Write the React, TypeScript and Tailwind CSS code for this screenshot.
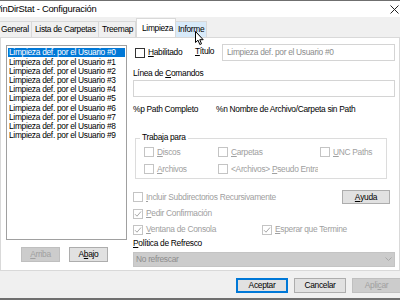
import type { ReactNode } from "react";

const users = Array.from({ length: 10 }, (_, i) => `Limpieza def. por el Usuario #${i}`);

function Box({ checked = false, disabled = true }: { checked?: boolean; disabled?: boolean }) {
  return (
    <span
      className={`inline-flex items-center justify-center w-[10px] h-[10px] border bg-white shrink-0 ${
        disabled ? "border-[#c4c4c4]" : "border-[#333333]"
      }`}
    >
      {checked && (
        <svg width="8" height="8" viewBox="0 0 8 8">
          <path d="M1 4.2 L3 6.2 L7 1.5" fill="none" stroke="#a8a8a8" strokeWidth="1" />
        </svg>
      )}
    </span>
  );
}

function Check({
  children,
  checked,
  disabled = true,
  className = "",
}: {
  children: ReactNode;
  checked?: boolean;
  disabled?: boolean;
  className?: string;
}) {
  return (
    <div className={`flex items-center gap-[3px] whitespace-nowrap ${disabled ? "text-[#a0a0a0]" : "text-black"} ${className}`}>
      <Box checked={checked} disabled={disabled} />
      <span>{children}</span>
    </div>
  );
}

function Btn({
  children,
  className = "",
  variant = "normal",
}: {
  children: ReactNode;
  className?: string;
  variant?: "normal" | "default" | "disabled";
}) {
  const look =
    variant === "default"
      ? "bg-[#e1e1e1] border-[#0078d7] border-2 text-black"
      : variant === "disabled"
      ? "bg-[#cccccc] border-[#bfbfbf] border text-[#a0a0a0]"
      : "bg-[#e1e1e1] border-[#adadad] border text-black";
  return <div className={`flex items-center justify-center ${look} ${className}`}>{children}</div>;
}

export default function App() {
  return (
    <div className="relative w-[400px] h-[300px] overflow-hidden bg-[#f0f0f0] text-[8.4px] tracking-[-0.3px] leading-none text-black font-['Liberation_Sans',Arial,sans-serif]">
      {/* TITLE BAR */}
      <div className="h-[17px] bg-white border-t border-[#6f6f6f] flex items-center justify-between">
        <span className="-ml-[8px] text-[9.4px] tracking-[-0.25px] whitespace-nowrap">WinDirStat - Configuración</span>
        <svg width="9" height="9" viewBox="0 0 9 9" className="mr-[1px]">
          <path d="M0.5 0.5 L8.5 8.5 M8.5 0.5 L0.5 8.5" stroke="#222" strokeWidth="1" />
        </svg>
      </div>

      {/* TABS */}
      <div className="h-[20px] flex items-end whitespace-nowrap">
        <div className="w-[32px] h-[16px] pl-[1px] flex items-center border border-l-0 border-b-0 border-[#d9d9d9] bg-[#f0f0f0]">General</div>
        <div className="w-[67px] h-[16px] pl-[3px] flex items-center border border-b-0 border-l-0 border-[#d9d9d9] bg-[#f0f0f0]">Lista de Carpetas</div>
        <div className="w-[37px] h-[16px] pl-[3px] flex items-center border border-b-0 border-l-0 border-[#d9d9d9] bg-[#f0f0f0]">Treemap</div>
        <div className="w-[40px] h-[19px] pl-[5px] flex items-center border border-b-0 border-[#d9d9d9] bg-white">Limpieza</div>
        <div className="w-[31px] h-[16px] pl-[2px] flex items-center border border-b-0 border-l-0 border-[#d9d9d9] bg-[#d8eaf9]">Informe</div>
      </div>

      {/* PAGE */}
      <div className="h-[234px] bg-white border border-[#d9d9d9] flex">
        {/* LEFT */}
        <div className="w-[132px] flex flex-col items-start pl-[5px] pt-[7px]">
          <div className="w-[121px] h-[195px] border border-[#a0a0a0] pt-[2px] px-[1px]">
            {users.map((u, i) => (
              <div
                key={u}
                className={`h-[9.2px] flex items-center px-[1px] whitespace-nowrap ${
                  i === 0 ? "bg-[#0078d7] text-white" : ""
                }`}
              >
                {u}
              </div>
            ))}
          </div>
          <div className="flex gap-[9px] mt-[7px] ml-[15px]">
            <Btn variant="disabled" className="w-[39px] h-[15px]">
              <u>A</u>rriba
            </Btn>
            <Btn className="w-[39px] h-[15px]">
              A<u>b</u>ajo
            </Btn>
          </div>
        </div>

        {/* RIGHT */}
        <div className="flex-1 flex flex-col pr-[4px] pt-[6px] whitespace-nowrap">
          <div className="flex items-center h-[17px]">
            <Check disabled={false} className="ml-[2px] w-[60px]">
              <u>H</u>abilitado
            </Check>
            <span className="w-[27px] -mt-[3px]">
              <u>T</u>ítulo
            </span>
            <div className="flex-1 h-[17px] border border-[#d4d4d4] flex items-center px-[4px] text-[#8c8c8c]">
              Limpieza def. por el Usuario #0
            </div>
          </div>

          <div className="mt-[7px] h-[10px] flex items-center">
            Línea de&nbsp;<u>C</u>omandos
          </div>
          <div className="mt-[2px] h-[17px] border border-[#d4d4d4]" />

          <div className="mt-[7px] h-[10px] flex items-center">
            <span className="w-[83px]">%p Path Completo</span>
            <span>%n Nombre de Archivo/Carpeta sin Path</span>
          </div>

          {/* GROUP */}
          <div className="relative mt-[24px] ml-[2px] mr-[8px] h-[41px] border border-[#dcdcdc]">
            <span className="absolute -top-[6px] left-[4px] bg-white px-[2px]">Trabaja para</span>
            <div className="grid grid-cols-[74px_102px_1fr] gap-y-[7px] pl-[8px] pt-[8px]">
              <Check>
                <u>D</u>iscos
              </Check>
              <Check>
                <u>C</u>arpetas
              </Check>
              <Check>
                <u>U</u>NC Paths
              </Check>
              <Check>
                <u>A</u>rchivos
              </Check>
              <Check className="w-[100px] overflow-hidden">
                &lt;Archivos&gt; <u>P</u>seudo Entra
              </Check>
            </div>
          </div>

          <div className="mt-[11px] flex items-center justify-between h-[14px]">
            <Check>
              <u>I</u>ncluir Subdirectorios Recursivamente
            </Check>
            <Btn className="w-[48px] h-[14px] mr-[5px]">
              <u>A</u>yuda
            </Btn>
          </div>
          <Check checked className="mt-[3px] h-[13px]">
            <u>P</u>edir Confirmación
          </Check>
          <div className="mt-[3px] h-[13px] flex items-center">
            <Check checked className="w-[129px]">
              <u>V</u>entana de Consola
            </Check>
            <Check checked>
              <u>E</u>sperar que Termine
            </Check>
          </div>
          <div className="mt-[2px] h-[11px] flex items-center">
            <u>P</u>olítica de Refresco
          </div>
          <div className="mt-[3px] h-[15px] bg-[#cccccc] border border-[#c4c4c4] flex items-center justify-between px-[2px] text-[#8d8d8d]">
            <span>No refrescar</span>
            <svg width="7" height="5" viewBox="0 0 7 5">
              <path d="M0.5 0.5 L3.5 3.5 L6.5 0.5" fill="none" stroke="#a8a8a8" />
            </svg>
          </div>
        </div>
      </div>

      {/* FOOTER */}
      <div className="h-[27px] flex items-center justify-end gap-[6px] pt-[2px]">
        <Btn variant="default" className="w-[52px] h-[15px]">
          Aceptar
        </Btn>
        <Btn className="w-[52px] h-[15px]">Cancelar</Btn>
        <Btn variant="disabled" className="w-[49px] h-[15px] -mr-[1px]">
          Apli<u>c</u>ar
        </Btn>
      </div>
      <div className="h-[2px] bg-[#6f6f6f]" />

      {/* MOUSE CURSOR */}
      <svg className="absolute left-[195px] top-[31px]" width="10" height="15" viewBox="0 0 10 15">
        <path
          d="M0.5 0.5 L0.5 11.5 L3 9.2 L4.8 13.5 L6.5 12.8 L4.8 8.7 L8.2 8.7 Z"
          fill="#ffffff"
          stroke="#000000"
          strokeWidth="1"
          strokeLinejoin="round"
        />
      </svg>
    </div>
  );
}
